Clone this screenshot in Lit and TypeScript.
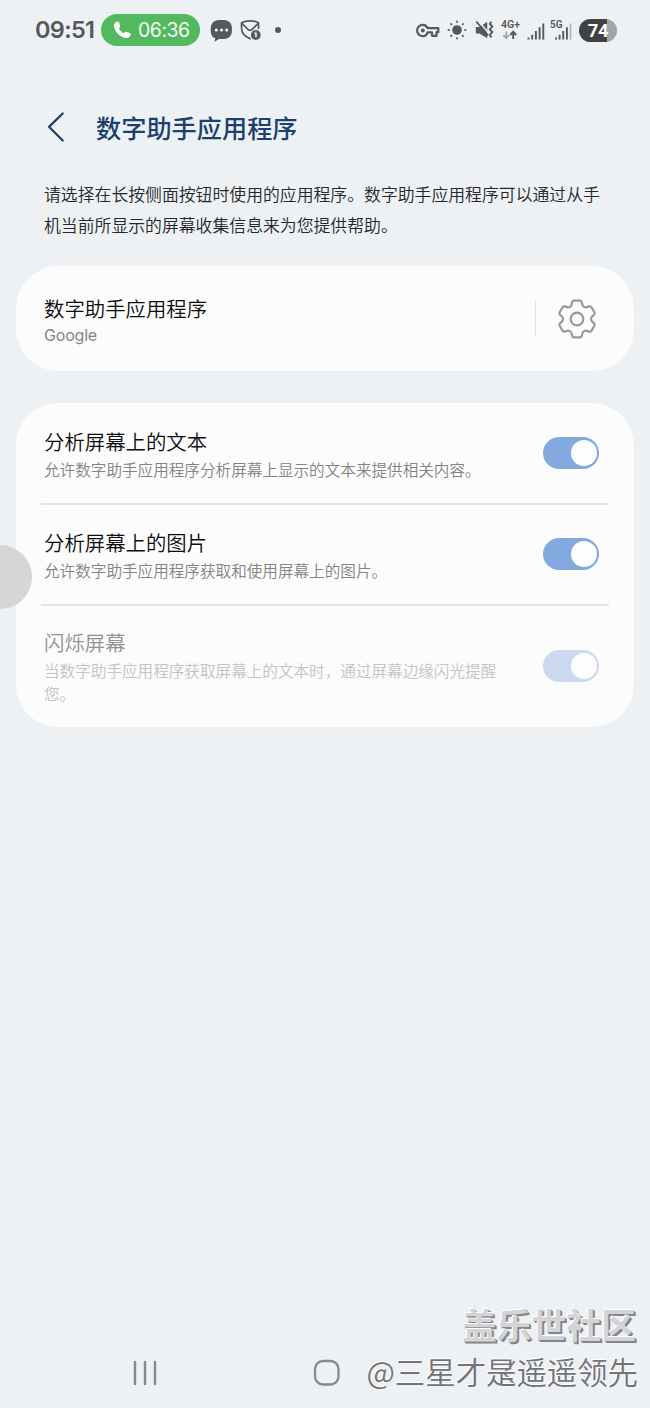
import { LitElement, html, css, svg } from "lit";
import { customElement, property } from "lit/decorators.js";

// Closed outline through the given points with every corner softened.
function roundedOutline(points: number[][], radius: number): string {
  const n = points.length;
  let d = "";
  for (let i = 0; i < n; i++) {
    const p = points[i];
    const toward = (q: number[]) => {
      const len = Math.hypot(q[0] - p[0], q[1] - p[1]);
      const t = Math.min(radius / len, 0.5);
      return [p[0] + (q[0] - p[0]) * t, p[1] + (q[1] - p[1]) * t];
    };
    const a = toward(points[(i + n - 1) % n]);
    const b = toward(points[(i + 1) % n]);
    d += `${i ? "L" : "M"}${a[0].toFixed(2)} ${a[1].toFixed(2)}Q${p[0].toFixed(2)} ${p[1].toFixed(2)} ${b[0].toFixed(2)} ${b[1].toFixed(2)}`;
  }
  return d + "Z";
}

const tooth = [[-5.8, -12.8], [-4.4, -18.4], [4.4, -18.4], [5.8, -12.8]];
const gearPath = roundedOutline(
  [0, 1, 2, 3, 4, 5].flatMap((k) => {
    const a = (k * Math.PI) / 3;
    return tooth.map(([x, y]) => [x * Math.cos(a) - y * Math.sin(a), x * Math.sin(a) + y * Math.cos(a)]);
  }),
  1.5
);

@customElement("toggle-switch")
export class ToggleSwitch extends LitElement {
  static styles = css`
    :host { display: block; flex: none; }
    .track {
      box-sizing: border-box; width: 56px; height: 32px; border-radius: 16px;
      padding: 3px 2.5px; background: #83a9df; display: flex; justify-content: flex-end;
    }
    .knob { width: 26px; height: 26px; border-radius: 50%; background: #fdfdfe; }
    .dim { background: #cbd9f0; }
  `;
  @property({ type: Boolean }) dim = false;
  render() {
    return html`<div class="track ${this.dim ? "dim" : ""}"><div class="knob"></div></div>`;
  }
}

@customElement("status-bar")
export class StatusBar extends LitElement {
  static styles = css`
    :host { display: block; }
    .bar { display: flex; align-items: center; height: 60px; padding: 0 33px 0 35px; color: #57585b; }
    svg { display: block; flex: none; }
    .time { font: 600 23.5px/30px Inter, "Noto Sans", sans-serif; width: 66px; letter-spacing: -0.7px; }
    .call {
      box-sizing: border-box; display: flex; align-items: center; width: 99px; height: 32px;
      border-radius: 16px; background: #53b95f; color: #f4fbf4; padding-left: 12px; gap: 6px;
      font: 400 19.5px/32px Inter, "Noto Sans", sans-serif; letter-spacing: -0.5px;
    }
    .chat { margin-left: 10px; }
    .mail { margin-left: 7px; }
    .dot { width: 6px; height: 6px; border-radius: 50%; background: #57585b; margin-left: 13px; }
    .right { margin-left: auto; display: flex; align-items: center; }
    .sun { margin-left: 7px; }
    .mute { margin-left: 8px; }
    .net { margin-left: 7px; }
    .sig { margin-left: 6px; }
    .sig2 { margin-left: 5px; }
    .battery {
      margin-left: 7px; width: 38px; height: 23px; border-radius: 12px;
      background: linear-gradient(90deg, #404143 0 28px, #a1a5a8 28px);
      color: #fff; font: 700 18.5px/24px Roboto, sans-serif; text-align: center; letter-spacing: -0.4px;
    }
    .label { font: 600 10.5px Roboto, sans-serif; fill: #57585b; }
  `;
  render() {
    return html`<div class="bar">
      <span class="time">09:51</span>
      <div class="call">
        <svg width="19" height="18" viewBox="0 0 19 18"><path fill="#fff" d="M3.6.8C5 .2 6 1 6.500 2.500L7 5c.2 1-.2 1.700-1.200 2.500C6.800 9.600 8.700 11.300 10.900 12.200c.8-1.200 1.500-1.600 2.600-1.300l2.700.8c1.500.5 2 1.600 1.300 2.900-1.200 2.300-3.500 3-6 2.200C6.500 15.300 2.400 11.200 1.100 6.300.500 3.800 1.300 1.800 3.600.8Z"/></svg>
        <span>06:36</span>
      </div>
      <svg class="chat" width="23" height="23" viewBox="0 0 23 23">
        <path fill="#57585b" d="M11.500 1c6.500 0 10.500 1.500 10.500 9.500S18 20 11.500 20H9l-4.500 2.700.8-3.400C2 18 .700 15.500.700 10.500.700 2.500 5 1 11.500 1Z"/>
        <g fill="#fff"><circle cx="6.300" cy="11" r="1.500"/><circle cx="11.500" cy="11" r="1.500"/><circle cx="16.700" cy="11" r="1.500"/></g>
      </svg>
      <svg class="mail" width="22" height="22" viewBox="0 0 22 22">
        <g fill="none" stroke="#57585b" stroke-width="1.700" stroke-linejoin="round" stroke-linecap="round">
          <path d="M18.500 9.500V3.700C15.500 2 13 1.800 10 1.800S4.500 2 1.500 3.700V9c0 5 3.500 8.500 8.500 10.600"/>
          <path d="M1.800 4.300 8.500 10.800q1.500 1 3 0l6.800-6.500"/>
        </g>
        <circle cx="15.800" cy="16" r="4.900" fill="#57585b"/>
        <path d="M14.500 14.200h1.500v4M15.800 12.700v.2" fill="none" stroke="#fff" stroke-width="1.400"/>
      </svg>
      <span class="dot"></span>
      <div class="right">
        <svg width="24" height="15" viewBox="0 0 24 15">
          <path fill="none" stroke="#57585b" stroke-width="2.200" stroke-linejoin="round" d="M11.600 5.200H22.300V9.200H20.500V12.800H16V9.300H11.600C10.800 11.800 9.100 13.200 6.800 13.200A5.700 5.700 0 1 1 6.800 1.800C9.100 1.800 10.800 3.200 11.600 5.200Z"/>
          <circle cx="6.800" cy="7.500" r="2" fill="#57585b"/>
        </svg>
        <svg class="sun" width="20" height="20" viewBox="-10 -10 20 20">
          <circle r="4.800" fill="#57585b"/>
          ${[0, 1, 2, 3, 4, 5, 6, 7].map((k) => svg`<path d="M0-9.300V-7.200" stroke="#57585b" stroke-width="1.700" transform="rotate(${k * 45})"/>`)}
        </svg>
        <svg class="mute" width="19" height="20" viewBox="0 0 19 20">
          <path fill="#57585b" d="M.8 7H4.500L12.200 1.800V18.200L4.500 13.500H.8Z"/>
          <path d="M3 .5 14.500 14" stroke="#edf1f4" stroke-width="1.500"/>
          <path d="M1.300 1.500 13 15.500" stroke="#57585b" stroke-width="1.900"/>
          <path d="M16.500 1.700 14.800 4l2.500 2.600-2.500 2.800 2.500 2.700-2.500 2.800 1.700 2.600" fill="none" stroke="#57585b" stroke-width="1.900"/>
        </svg>
        <svg class="net" width="20" height="22" viewBox="0 0 20 22">
          <text class="label" x="0" y="9" textLength="19" lengthAdjust="spacingAndGlyphs">4G+</text>
          <path d="M5.200 12.500V19M2.300 16.200 5.200 19.200 8 16.200" fill="none" stroke="#a5a8ac" stroke-width="1.800"/>
          <path d="M12.200 20V13M9.200 16 12.200 12.800 15.200 16" fill="none" stroke="#57585b" stroke-width="2"/>
        </svg>
        <svg class="sig" width="18" height="22" viewBox="0 0 18 22">
          <path d="M1.500 20.500V18.500M5.200 20.500V15.800M8.900 20.500V12M12.600 20.500V8.200M16.300 20.500V4.500" stroke="#57585b" stroke-width="1.900"/>
        </svg>
        <svg class="sig2" width="22" height="22" viewBox="0 0 22 22">
          <text class="label" x="0" y="9" textLength="12.500" lengthAdjust="spacingAndGlyphs">5G</text>
          <path d="M6 20.500V18.500M9.600 20.500V15.800M13.200 20.500V12M16.900 20.500V8.200" stroke="#57585b" stroke-width="1.900"/>
          <path d="M20.500 20.500V4.500" stroke="#b2b5b8" stroke-width="1.800"/>
        </svg>
        <div class="battery">74</div>
      </div>
    </div>`;
  }
}

@customElement("app-root")
export class AppRoot extends LitElement {
  static styles = css`
    :host { display: block; }
    .screen {
      position: relative; box-sizing: border-box; width: 650px; height: 1408px; overflow: hidden;
      background: #edf1f4; display: flex; flex-direction: column;
      font-family: "Noto Sans CJK SC", sans-serif; color: #0c0c0d;
    }
    svg { display: block; flex: none; }
    .header { display: flex; align-items: center; height: 60px; margin-top: 37px; padding-left: 46px; gap: 30px; }
    .header h1 { margin: 0; font-size: 25.2px; line-height: 36px; font-weight: 500; color: #1d416f; white-space: nowrap; }
    .intro { margin: 22px 0 0 44px; font-size: 16.85px; line-height: 30.500px; font-weight: 350; color: #26272b; white-space: nowrap; }
    .card { margin: 0 16px; background: #fcfcfd; border-radius: 42px; }
    .assistant { margin-top: 26px; height: 105px; display: flex; align-items: center; padding-left: 28px; box-sizing: border-box; }
    .grow { flex: 1; padding-top: 2px; }
    .title { font-size: 20.4px; line-height: 28px; font-weight: 350; white-space: nowrap; }
    .google { font: 400 16px/22px Inter, sans-serif; color: #85868a; letter-spacing: -0.2px; margin-top: 2px; }
    .rule { width: 1px; height: 35px; background: #dedfe1; margin-right: 20px; }
    .gear { margin-right: 36px; }
    .options { margin-top: 32px; height: 324px; display: flex; flex-direction: column; }
    .row { display: flex; align-items: center; padding: 0 35px 0 28px; height: 100px; }
    .second { height: 97px; padding-bottom: 2px; }
    .last { height: 121px; box-sizing: border-box; padding-bottom: 2px; }
    .sep { height: 2px; margin: 0 25px; background: #e4e5e7; }
    .desc { font-size: 15.6px; line-height: 23px; font-weight: 350; color: #828386; margin-top: 3px; white-space: nowrap; }
    .off .title { color: #909193; }
    .off .desc { color: #c2c3c5; }
    .handle { position: absolute; left: -32px; top: 545px; width: 64px; height: 64px; border-radius: 50%; background: #d5d6d7; }
    .nav { margin-top: auto; height: 71px; display: flex; align-items: center; padding: 0 0 0 133px; }
    .home { margin-left: 156px; }
    .back { margin-left: 160px; }
    .mark { position: absolute; right: 14px; bottom: 14px; text-align: right; white-space: nowrap; }
    .brand {
      font-size: 34.8px; line-height: 44px; font-weight: 700; color: #d3d4d6; margin-bottom: 2px;
      text-shadow: -1px -1px 0 #fff, 1px 1px 0 #85868a, 2px 2px 0 #85868a;
    }
    .author {
      font-size: 30.4px; line-height: 46px; font-weight: 350; color: #727376; margin-right: -2px;
      text-shadow: -1px -1px 0 #fff;
    }
  `;

  render() {
    return html`<main class="screen">
      <status-bar></status-bar>
      <header class="header">
        <svg width="20" height="32" viewBox="0 0 20 32"><path d="M16.700 2.500 3 15.800 16.700 29.500" fill="none" stroke="#1d416f" stroke-width="2.300" stroke-linecap="round" stroke-linejoin="round"/></svg>
        <h1>数字助手应用程序</h1>
      </header>
      <div class="intro">请选择在长按侧面按钮时使用的应用程序。数字助手应用程序可以通过从手<br />机当前所显示的屏幕收集信息来为您提供帮助。</div>
      <section class="card assistant">
        <div class="grow"><div class="title">数字助手应用程序</div><div class="google">Google</div></div>
        <div class="rule"></div>
        <svg class="gear" width="42" height="42" viewBox="-21 -21 42 42" fill="none" stroke="#98999b" stroke-width="2.200">
          <path d=${gearPath} /><circle r="6.300" />
        </svg>
      </section>
      <section class="card options">
        <div class="row">
          <div class="grow"><div class="title">分析屏幕上的文本</div><div class="desc">允许数字助手应用程序分析屏幕上显示的文本来提供相关内容。</div></div>
          <toggle-switch></toggle-switch>
        </div>
        <div class="sep"></div>
        <div class="row second">
          <div class="grow"><div class="title">分析屏幕上的图片</div><div class="desc">允许数字助手应用程序获取和使用屏幕上的图片。</div></div>
          <toggle-switch></toggle-switch>
        </div>
        <div class="sep"></div>
        <div class="row last off">
          <div class="grow"><div class="title">闪烁屏幕</div><div class="desc">当数字助手应用程序获取屏幕上的文本时，通过屏幕边缘闪光提醒<br />您。</div></div>
          <toggle-switch dim></toggle-switch>
        </div>
      </section>
      <div class="handle"></div>
      <nav class="nav">
        <svg width="24" height="26" viewBox="0 0 24 26"><path d="M2 2V24M12 2V24M22 2V24" stroke="#88898d" stroke-width="2.400" stroke-linecap="round"/></svg>
        <svg class="home" width="28" height="28" viewBox="0 0 28 28"><rect x="2" y="2" width="23.500" height="23.500" rx="8" fill="none" stroke="#88898d" stroke-width="2.300"/></svg>
        <svg class="back" width="16" height="26" viewBox="0 0 16 26"><path d="M13 2 3 13 13 24" fill="none" stroke="#88898d" stroke-width="2.300" stroke-linecap="round"/></svg>
      </nav>
      <div class="mark"><div class="brand">盖乐世社区</div><div class="author">@三星才是遥遥领先</div></div>
    </main>`;
  }
}
